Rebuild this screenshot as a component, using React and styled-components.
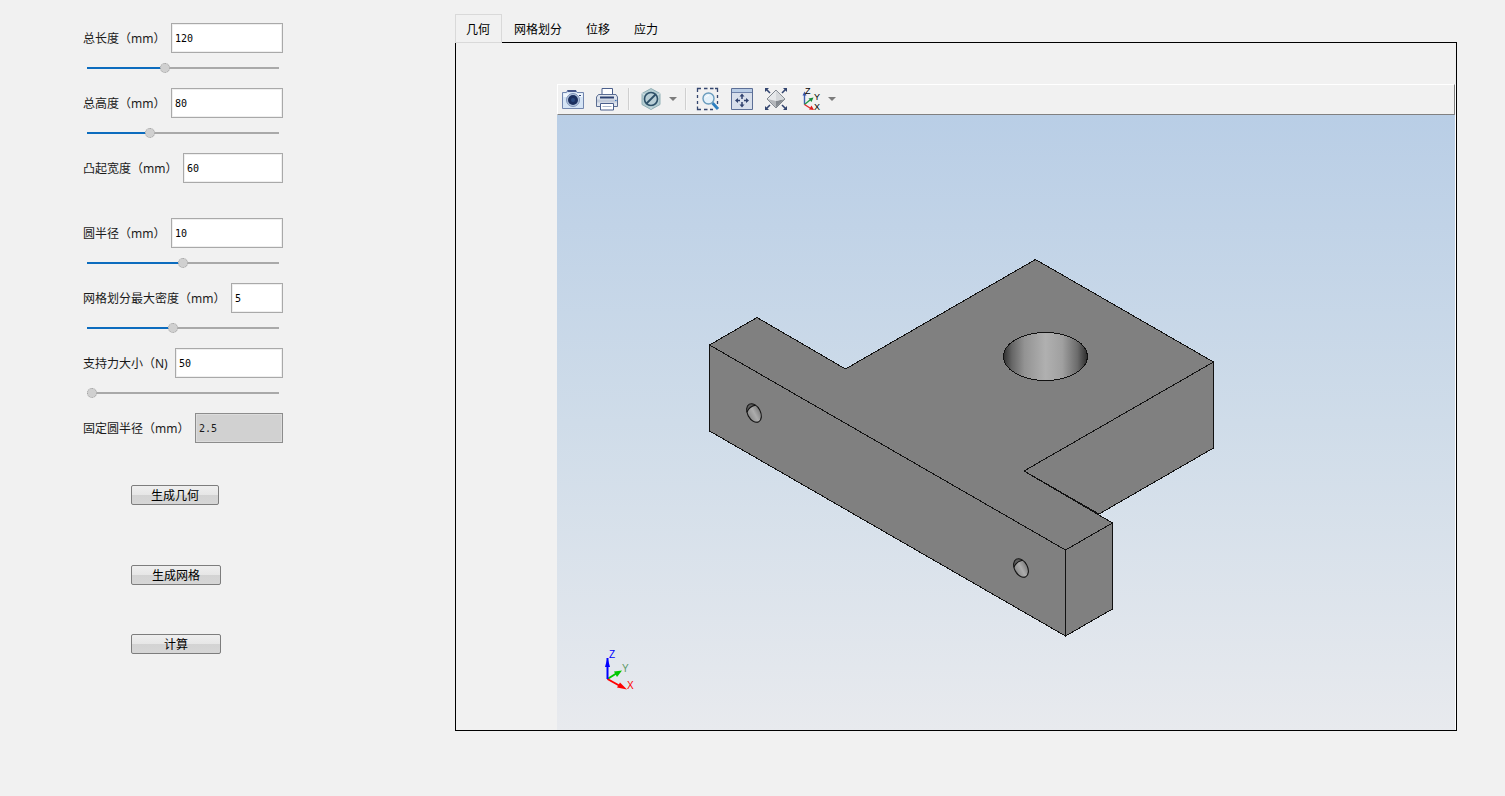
import React, {Component} from 'react';
import styled, {createGlobalStyle, css} from 'styled-components'

const GlobalStyle = createGlobalStyle`
  * {
    box-sizing: border-box;
  }

  body {
    margin: 0;
    background: #f1f1f1;
    color: #1a1a1a;
    font-family: 'Noto Sans', 'Noto Sans CJK SC', sans-serif;
    font-size: 12px;
  }
`

const Page = styled.div`
  display: flex;
  align-items: flex-start;
  gap: 172px;
  min-height: 100vh;
  padding: 0 48px 0 83px;
`

const Sidebar = styled.form`
  flex: 0 0 200px;
  min-width: 0;
  padding-top: 23px;
`

const Field = styled.div`
  min-height: 65px;
`

const FieldRow = styled.div`
  display: flex;
  align-items: center;
`

const Label = styled.label`
  flex: 0 0 ${props => props.$width}px;
  padding-top: 2px;
  line-height: 28px;
  white-space: nowrap;
`

const TextBox = styled.input`
  flex: 1;
  min-width: 0;
  height: 30px;
  padding: 0 3px;
  border: 1px solid #a9a9a9;
  outline: 0;
  background: #fff;
  box-shadow: inset 0 0 0 1px #efefef;
  color: #000;
  font-family: 'DejaVu Sans Mono', monospace;
  font-size: 10px;

  &:disabled {
    border-color: #8c8c8c;
    background: #d1d1d1;
    color: #1a1a1a;
    box-shadow: inset 0 0 0 1px #dcdcdc;
  }
`

const Slider = styled.input`
  display: block;
  appearance: none;
  width: 192px;
  height: 30px;
  margin: 0 4px;
  background: transparent;

  &::-webkit-slider-runnable-track {
    height: 2px;
    background: linear-gradient(to right, #0c6cbe var(--fill), #a9a9a9 var(--fill));
  }

  &::-webkit-slider-thumb {
    appearance: none;
    width: 10px;
    height: 10px;
    margin-top: -4px;
    border: 1px dotted #a0a0a0;
    border-radius: 50%;
    background: #d0d0d0;
  }
`

const Actions = styled.div`
  display: grid;
  grid-template-rows: 80px 69px 20px;
  align-items: start;
  justify-items: start;
  margin: 7px 0 0 48px;
`

const ActionButton = styled.button`
  width: ${props => props.$width || 90}px;
  height: 20px;
  padding: 0;
  border: 1px solid #7d7d7d;
  border-radius: 2px;
  background: linear-gradient(#efefef, #e6e6e6 50%, #d3d3d3 50%, #d6d6d6);
  color: #000;
  font-family: 'Noto Sans CJK SC', sans-serif;
  font-size: 12px;
  line-height: 18px;
`

const Results = styled.div`
  flex: 1;
  min-width: 0;
  padding-top: 14px;
`

const TabBar = styled.div`
  display: flex;
  margin-bottom: -1px;
`

const Tab = styled.button`
  position: relative;
  height: 29px;
  padding: 0 12px 0 11px;
  border: 1px solid transparent;
  border-width: 1px 0 1px 1px;
  background: transparent;
  color: #000;
  font-family: 'Noto Sans CJK SC', sans-serif;
  font-size: 12px;
  line-height: 27px;

  ${props => props.$active && css`
    padding: 0 11px 0 10px;
    border-width: 1px;
    border-color: #d9d9d9;
    background: #f1f1f1;
  `}
`

const Panel = styled.div`
  padding: 41px 0 0 101px;
  border: 1px solid #000;
`

const Viewer = styled.div`
  border-right: 1px solid #fff;
`

const Toolbar = styled.div`
  display: flex;
  align-items: flex-start;
  gap: 6px;
  height: 31px;
  padding-left: 1px;
  border: 1px solid #808080;
  border-top-color: #fff;
  border-left-color: #fff;
`

const ToolButton = styled.button`
  display: flex;
  align-items: center;
  gap: 4px;
  padding: 0;
  border: 0;
  background: transparent;

  svg {
    display: block;
  }
`

const Caret = styled.span`
  width: 8px;
  height: 4px;
  margin-right: 1px;
  background: #7c7c7c;
  clip-path: polygon(0 0, 100% 0, 50% 100%);
`

const Separator = styled.span`
  width: 2px;
  height: 22px;
  margin: 3px 1px;
  border-left: 1px solid #cfcfcf;
  border-right: 1px solid #f7f7f7;
`

const Canvas = styled.svg`
  display: block;
  width: 100%;
  height: auto;
  background: linear-gradient(#b9cee6, #cfdce9 50%, #e8eaee);
  font-family: 'Liberation Sans', sans-serif;
  font-size: 10px;
`

const fields = [
  {id: 'length', label: '总长度（mm）', labelWidth: 88, value: '120', min: 80, max: 180},
  {id: 'height', label: '总高度（mm）', labelWidth: 88, value: '80', min: 50, max: 144},
  {id: 'width', label: '凸起宽度（mm）', labelWidth: 100, value: '60'},
  {id: 'radius', label: '圆半径（mm）', labelWidth: 88, value: '10', min: 5, max: 15},
  {id: 'mesh', label: '网格划分最大密度（mm）', labelWidth: 148, value: '5', min: 1, max: 10},
  {id: 'force', label: '支持力大小（N)', labelWidth: 92, value: '50', min: 50, max: 200},
  {id: 'fixed', label: '固定圆半径（mm）', labelWidth: 112, value: '2.5', disabled: true}
]

const tabs = ['几何', '网格划分', '位移', '应力']

const Icon = ({children}) => (
  <svg width='28' height='28' viewBox='0 0 28 28' fill='none' aria-hidden='true'>
    {children}
  </svg>
)

const CameraIcon = () => (
  <Icon>
    <path d='M3.5 7.5H7.5L8.5 5.5H17L18 7.5H24.5V23.5H3.5Z' fill='#d5e4f5' stroke='#7286ae' />
    <path d='M4.5 8.5H23.5V12H4.5Z' fill='#f2f8fd' />
    <path d='M8.5 6H17' stroke='#46578a' strokeWidth='2' />
    <circle cx='14' cy='15' r='6.5' fill='#b3c5de' stroke='#7f92b6' />
    <circle cx='14' cy='15' r='5' fill='#1b2f5f' />
    <circle cx='14' cy='15' r='2' fill='#2b4a80' />
    <path d='M20 10.5H22' stroke='#2e4376' />
  </Icon>
)

const PrinterIcon = () => (
  <Icon>
    <path d='M9 10V3.5H19.5V10' fill='#fff' stroke='#4a5f8c' />
    <path d='M5.5 9.5H23L24.5 12V21.5H3.5V12Z' fill='#dfe5ee' stroke='#5b6d92' />
    <path d='M4 14.5H24V17.5H4Z' fill='#c2cbda' />
    <path d='M7 12.5H21' stroke='#2e4271' strokeWidth='2' />
    <path d='M7.5 18.5H20.5V25H7.5Z' fill='#fff' stroke='#4a5f8c' />
    <path d='M9.5 21.5H18.5' stroke='#a8b6cc' />
    <path d='M22 15.5H23.5' stroke='#3d78c0' />
  </Icon>
)

const HiddenIcon = () => (
  <Icon>
    <path d='M14 3.5L23 8.5V19.5L14 24.5L5 19.5V8.5Z' fill='#b4cdd2' stroke='#90afb5' />
    <path d='M5 8.5L14 13L23 8.5M14 13V24' stroke='#d3e1e4' />
    <circle cx='14' cy='14' r='6.5' fill='#b9cfd6' stroke='#2d5068' strokeWidth='1.6' />
    <path d='M9.5 18.5L18.5 9.5' stroke='#2d5068' strokeWidth='1.8' />
  </Icon>
)

const ZoomAreaIcon = () => (
  <Icon>
    <path d='M3.5 7V3.5H7M10 3.5H13.5M16 3.5H19.5M21 3.5H23.5V7M23.5 10V13M23.5 16V19M3.5 10V13M3.5 16V19M3.5 21.5V24.5H7M10 24.5H13.5M16 24.5H19' stroke='#34466f' strokeWidth='1.3' />
    <path d='M18.5 18L24 24' stroke='#2e7fc0' strokeWidth='3' />
    <circle cx='14.5' cy='13.5' r='5.5' fill='#e3f1fa' stroke='#6a9cbd' strokeWidth='1.4' />
    <path d='M11.5 12.5Q12.5 10.5 15 10.5' stroke='#fff' />
  </Icon>
)

const PanIcon = () => (
  <Icon>
    <path d='M3.5 3.5H24.5V24.5H3.5Z' fill='#d8dfeb' stroke='#5c6f97' />
    <path d='M4 4H24V7H4Z' fill='#b8cce5' />
    <path d='M4 7.5H24' stroke='#6e82aa' />
    <path d='M14 11V14M14 17V20M9 15.5H12M16 15.5H19' stroke='#30426f' strokeWidth='1.5' />
    <path d='M14 8.5L16.5 11.5H11.5ZM14 22.5L11.5 19.5H16.5ZM7 15.5L10 13V18ZM21 15.5L18 18V13Z' fill='#30426f' />
  </Icon>
)

const RotateIcon = () => (
  <Icon>
    <path d='M4 4L8 8M24 4L20 8M4 24L8 20M24 24L20 20' stroke='#33456f' strokeWidth='1.6' />
    <path d='M3 3H7L3 7ZM25 3V7L21 3ZM3 25V21L7 25ZM25 25H21L25 21Z' fill='#33456f' />
    <path d='M14 5L23 14L14 23L5 14Z' fill='#e6e8ea' stroke='#7f868e' />
    <path d='M5.5 14L14 16V22.5Z' fill='#b4b7bb' />
    <path d='M22.5 14L14 16V22.5Z' fill='#84898f' />
    <path d='M14 5.5L22.5 14L14 16Z' fill='#d5d8db' />
  </Icon>
)

const AxesIcon = () => (
  <Icon>
    <path d='M8.5 19.5V9' stroke='#3d5fb0' strokeWidth='1.4' />
    <path d='M8.5 6.5L10.5 10.5H6.5Z' fill='#3553a8' />
    <path d='M8.5 19.5L14 15' stroke='#1e9a46' strokeWidth='1.4' />
    <path d='M17.5 12.5L15.5 17L12.5 13.5Z' fill='#168a3c' />
    <path d='M8.5 19.5L14 23' stroke='#e02a2a' strokeWidth='1.4' />
    <path d='M18 25L13 24.5L15.5 20.5Z' fill='#e41c1c' />
    <g fill='#000' fontFamily='Liberation Sans, sans-serif' fontSize='9'>
      <text x='9' y='9'>Z</text>
      <text x='18' y='15'>Y</text>
      <text x='18' y='25'>X</text>
    </g>
  </Icon>
)

class ParameterField extends Component {
  //Position of the slider thumb's centre, the thumb being 10px wide
  fill() {
    const {min, max} = this.props.field
    const ratio = Math.min(1, Math.max(0, (Number(this.props.value) - min) / (max - min)))

    return `calc(${ratio * 100}% + ${5 - ratio * 10}px)`
  }

  render() {
    const {field, value, onChange} = this.props

    return (
      <Field>
        <FieldRow>
          <Label htmlFor={field.id} $width={field.labelWidth}>{field.label}</Label>
          <TextBox id={field.id}
                   type='text'
                   value={value}
                   disabled={field.disabled}
                   onChange={e => onChange(field.id, e.target.value)} />
        </FieldRow>
        {field.max &&
          <Slider type='range'
                  aria-label={field.label}
                  min={field.min}
                  max={field.max}
                  value={value}
                  style={{'--fill': value == field.min ? '0%' : this.fill()}}
                  onChange={e => onChange(field.id, e.target.value)} />
        }
      </Field>
    );
  }
}

const BoltHole = ({x, y}) => (
  <g transform={`translate(${x} ${y}) rotate(-28)`}>
    <ellipse rx='6.5' ry='10' fill='#5c5c5c' />
    <path d='M-6 -3Q0 -9 6 -5Q8 4 2 9Q-2 11 -5 5Z' fill='url(#bolt)' />
    <path d='M-6 -4Q-1 -8 5 -6' stroke='#111' fill='none' />
    <ellipse rx='6.5' ry='10' fill='none' stroke='#111' />
  </g>
)

const Scene = () => (
  <Canvas viewBox='0 0 898 615' role='img' aria-label='几何'>
    <defs>
      <linearGradient id='bore'>
        <stop offset='0' stopColor='#303030' />
        <stop offset='0.1' stopColor='#666' />
        <stop offset='0.25' stopColor='#939393' />
        <stop offset='0.5' stopColor='#b0b0b0' />
        <stop offset='0.7' stopColor='#a0a0a0' />
        <stop offset='0.88' stopColor='#6c6c6c' />
        <stop offset='1' stopColor='#2c2c2c' />
      </linearGradient>
      <linearGradient id='bolt'>
        <stop offset='0' stopColor='#8c8c8c' />
        <stop offset='0.5' stopColor='#acacac' />
        <stop offset='1' stopColor='#7c7c7c' />
      </linearGradient>
    </defs>

    {/* bracket */}
    <g fill='#808080' stroke='#111' strokeWidth='1' strokeLinejoin='round' shapeRendering='crispEdges'>
      <path d='M656.5 247V333L542 399L467 356Z' />
      <path d='M152.5 230L200 202.5L288.5 254L478.5 144.5L656.5 247L467 356L555.5 408L508.5 435Z' />
      <path d='M152.5 230V316L508.5 521V435Z' />
      <path d='M508.5 435V521L555.5 494V408Z' />
      <ellipse cx='488.5' cy='241.5' rx='42' ry='24' fill='url(#bore)' />
    </g>
    <BoltHole x={197} y={298} />
    <BoltHole x={464} y={453} />

    {/* orientation triad */}
    <g strokeWidth='2'>
      <path d='M50.5 564L60 558' stroke='#00c800' />
      <path d='M65 555.5L60 562L57 556.5Z' fill='#00c800' />
      <path d='M50.5 564L63 571' stroke='#f00' />
      <path d='M70 574.5L60 572.5L63 567.5Z' fill='#f00' />
      <path d='M50.5 564V543' stroke='#00f' />
      <path d='M50.5 543L53 552H48Z' fill='#00f' />
    </g>
    <text x='52' y='543' fill='#00f'>Z</text>
    <text x='65' y='557' fill='#5f9a68'>Y</text>
    <text x='70' y='574' fill='#f00'>X</text>
  </Canvas>
)

class App extends Component {
  constructor(props) {
    super(props)

    this.changeValue = this.changeValue.bind(this)

    this.state = {
      activeTab: 0,
      values: Object.fromEntries(fields.map(field => [field.id, field.value]))
    };
  }

  changeValue(id, value) {
    this.setState({
      values: {...this.state.values, [id]: value}
    });
  }

  render() {
    return (
      <Page>
        <GlobalStyle />
        <Sidebar onSubmit={e => e.preventDefault()}>
          {fields.map(field => (
            <ParameterField key={field.id}
                            field={field}
                            value={this.state.values[field.id]}
                            onChange={this.changeValue} />
          ))}
          <Actions>
            <ActionButton type='button' $width={88}>生成几何</ActionButton>
            <ActionButton type='button'>生成网格</ActionButton>
            <ActionButton type='button'>计算</ActionButton>
          </Actions>
        </Sidebar>

        <Results>
          <TabBar role='tablist'>
            {tabs.map((tab, i) => (
              <Tab key={tab}
                   type='button'
                   role='tab'
                   aria-selected={this.state.activeTab === i}
                   $active={this.state.activeTab === i}
                   onClick={() => this.setState({activeTab: i})}>
                {tab}
              </Tab>
            ))}
          </TabBar>
          <Panel role='tabpanel'>
            <Viewer>
              <Toolbar role='toolbar'>
                <ToolButton type='button' aria-label='截图'><CameraIcon /></ToolButton>
                <ToolButton type='button' aria-label='打印'><PrinterIcon /></ToolButton>
                <Separator />
                <ToolButton type='button' aria-label='隐藏'><HiddenIcon /><Caret /></ToolButton>
                <Separator />
                <ToolButton type='button' aria-label='框选缩放'><ZoomAreaIcon /></ToolButton>
                <ToolButton type='button' aria-label='平移'><PanIcon /></ToolButton>
                <ToolButton type='button' aria-label='缩放到全部'><RotateIcon /></ToolButton>
                <ToolButton type='button' aria-label='视图方向'><AxesIcon /><Caret /></ToolButton>
              </Toolbar>
              <Scene />
            </Viewer>
          </Panel>
        </Results>
      </Page>
    );
  }
}

export default App
